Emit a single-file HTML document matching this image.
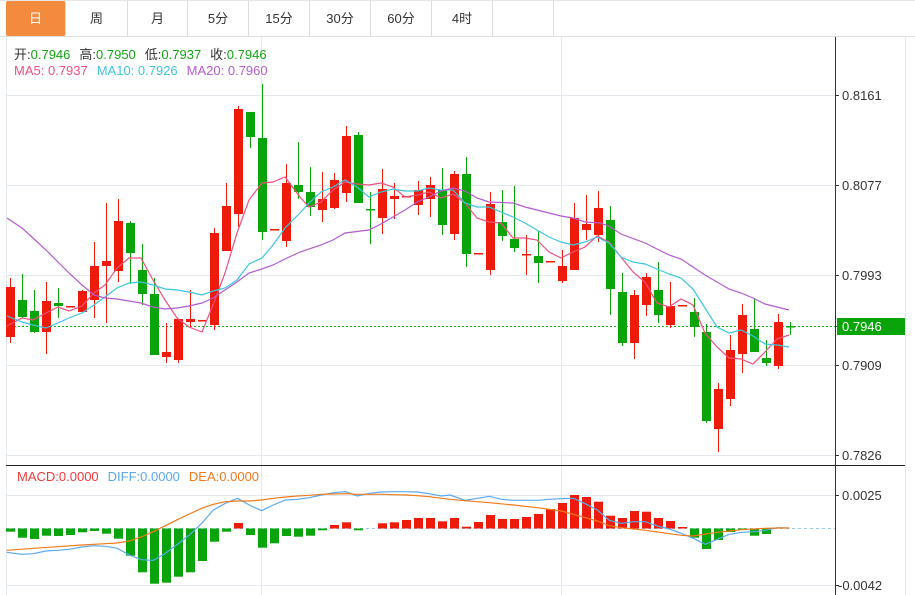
<!DOCTYPE html>
<html><head><meta charset="utf-8"><style>
body{margin:0;width:915px;height:595px;background:#fff;font-family:"Liberation Sans","Noto Sans CJK SC",sans-serif;overflow:hidden;position:relative}
.tab{position:absolute;top:1px;height:35px;line-height:35px;text-align:center;font-size:13px;color:#333;border-right:1px solid #ddd;box-sizing:border-box}
.t{position:absolute;font-size:13px;white-space:nowrap}
.t i{font-style:normal;margin-right:9px}
</style></head><body>
<div style="position:absolute;left:0;top:36px;width:915px;height:1px;background:#ddd"></div>
<div style="position:absolute;left:0;top:0;width:915px;height:1px;background:#e5e5e5"></div>
<div class="tab" style="left:6px;width:60px;background:#f28b3e;color:#fff;border-radius:2px">日</div>
<div class="tab" style="left:66px;width:62px">周</div>
<div class="tab" style="left:128px;width:60px">月</div>
<div class="tab" style="left:188px;width:61px">5分</div>
<div class="tab" style="left:249px;width:61px">15分</div>
<div class="tab" style="left:310px;width:61px">30分</div>
<div class="tab" style="left:371px;width:61px">60分</div>
<div class="tab" style="left:432px;width:61px">4时</div>
<div class="tab" style="left:493px;width:61px;border-right:1px solid #ddd"></div>
<svg id="s" width="915" height="595" style="position:absolute;left:0;top:0"></svg>
<div class="t" style="left:14px;top:44px;color:#333"><i>开:<span style="color:#13a313">0.7946</span></i><i>高:<span style="color:#13a313">0.7950</span></i><i>低:<span style="color:#13a313">0.7937</span></i>收:<span style="color:#13a313">0.7946</span></div>
<div class="t" style="left:14px;top:63px"><i style="color:#f0507f">MA5: 0.7937</i><i style="color:#3ec5dc">MA10: 0.7926</i><span style="color:#b35ccc">MA20: 0.7960</span></div>
<div class="t" style="left:17px;top:469px"><i style="color:#f03a3a">MACD:0.0000</i><i style="color:#5aa9f0">DIFF:0.0000</i><span style="color:#f07a1a">DEA:0.0000</span></div>
<div class="t" style="left:842px;top:88px;color:#333">0.8161</div>
<div class="t" style="left:842px;top:178px;color:#333">0.8077</div>
<div class="t" style="left:842px;top:268px;color:#333">0.7993</div>
<div class="t" style="left:842px;top:358px;color:#333">0.7909</div>
<div class="t" style="left:842px;top:448px;color:#333">0.7826</div>
<div style="position:absolute;left:837px;top:318px;width:68px;height:17px;background:#09a30a"></div>
<div class="t" style="left:842px;top:319px;color:#fff">0.7946</div>
<div class="t" style="left:842px;top:488px;color:#333">0.0025</div>
<div class="t" style="left:838px;top:578px;color:#333">-0.0042</div>
<script>
var s=document.getElementById('s'),h='';
function L(x1,y1,x2,y2,c,w,d){h+='<line x1="'+x1+'" y1="'+y1+'" x2="'+x2+'" y2="'+y2+'" stroke="'+c+'" stroke-width="'+(w||1)+'"'+(d?' stroke-dasharray="'+d+'"':'')+'/>';}
function R(x,y,w,hh,c){h+='<rect x="'+x+'" y="'+y+'" width="'+w+'" height="'+Math.max(hh,1.5)+'" fill="'+c+'"/>';}
function P(pts,c){h+='<polyline fill="none" stroke="'+c+'" stroke-width="1.2" points="'+pts.map(function(p){return p.join(',')}).join(' ')+'"/>';}
var g='#e3e9ef';
[95,185,275,365,455,495,585].forEach(function(y){L(6,y+.5,835,y+.5,g)});
L(261.5,37,261.5,595,g);L(561.5,37,561.5,595,g);
L(6.5,37,6.5,595,g);L(905.5,37,905.5,595,g);
L(835.5,37,835.5,595,'#333');
[95,185,275,365,455,495,585,326].forEach(function(y){L(835,y+.5,839,y+.5,'#333')});
L(6,465.5,905,465.5,'#222');
L(6,326.5,835,326.5,'#13b313',1,'2,2');
L(6,528.5,835,528.5,'#9cc8e0',1,'3,3');
var RD='#ee1a0a',GR='#09a30a';
var C=[['r',287,337,278,343],['g',300,317,274,318],['g',311,332,290,333],['r',301,332,282,354],['g',303,306,288,318],['r',306,306,306,306],['r',291,312,290,312],['r',266,300,242,318],['r',261,266,203,323],['r',221,271,199,282],
['g',223,253,221,284],['g',270,294,244,305],['g',294,355,278,355],['r',352,357,323,363],['r',319,360,319,363],['r',319,322,290,327],['r',320,320,320,320],['r',233,325,228,330],['r',206,251,183,251],['r',109,214,106,227],
['g',112,137,112,148],['g',138,232,84,240],['r',229,229,229,229],['r',183,241,164,247],['g',185,192,142,199],['g',192,207,167,216],['r',199,210,172,222],['r',180,208,173,209],['r',136,193,126,202],['g',135,203,132,203],
['g',209,209,192,244],['r',189,218,169,234],['r',196,199,183,219],['r',196,196,196,196],['r',190,205,181,215],['r',185,199,177,217],['g',190,225,168,235],['r',174,234,171,240],['g',174,254,157,267],['r',253,253,253,253],
['r',204,270,192,275],['g',222,236,190,241],['g',239,248,186,252],['r',254,254,235,275],['g',256,263,231,283],['r',261,261,261,261],['r',266,281,250,283],['r',218,270,203,270],['r',224,230,195,240],['r',208,235,191,242],
['g',220,289,206,315],['g',292,343,273,346],['r',295,343,290,359],['r',277,305,273,316],['g',290,315,262,323],['r',306,325,282,328],['r',305,305,305,305],['g',312,327,298,337],['g',332,421,324,423],['r',389,429,383,452],
['r',350,399,335,406],['r',315,354,304,373],['g',329,352,298,352],['g',358,363,340,366],['r',322,366,314,369],['g',326,326,322,335]];
C.forEach(function(c,i){var x=10.5+12*i,col=c[0]=='r'?RD:GR;L(x,c[3],x,c[4],col);R(x-4.5,c[1],9,c[2]-c[1],col);});
P([[7,326],[22,318],[33,320],[46,313],[58,307],[69,311],[82,306],[94,293],[105,285],[117,268],[129,258],[141,258],[153,280],[165,300],[177,318],[189,327],[202,332],[213,305],[225,273],[237,233],[249,200],[262,183],[273,182],[285,177],[300,197],[309,207],[321,202],[333,190],[345,182],[357,184],[369,185],[381,183],[393,187],[405,197],[417,195],[429,192],[441,198],[453,194],[465,203],[477,218],[489,222],[501,223],[513,238],[525,238],[537,240],[549,252],[561,258],[573,252],[585,247],[597,236],[609,242],[621,257],[633,272],[645,282],[657,303],[669,307],[681,299],[693,305],[705,333],[717,347],[729,358],[741,359],[753,364],[765,352],[777,339],[789,335]],'#f0507f');
P([[7,316],[22,322],[33,325],[46,328],[58,323],[69,318],[82,313],[94,305],[105,297],[117,288],[129,283],[141,282],[153,285],[165,289],[177,290],[189,292],[202,295],[213,291],[225,288],[237,280],[249,264],[262,258],[273,245],[285,228],[300,213],[309,203],[321,192],[333,187],[345,180],[357,187],[369,197],[381,192],[393,189],[405,191],[417,191],[429,188],[441,190],[453,190],[465,203],[477,207],[489,207],[501,212],[513,217],[525,223],[537,230],[549,237],[561,242],[573,245],[585,242],[597,237],[609,243],[621,257],[633,262],[645,264],[657,269],[669,274],[681,278],[693,289],[705,308],[717,327],[729,333],[741,330],[753,336],[765,344],[777,345],[789,347]],'#3ec5dc');
P([[7,218],[22,228],[33,238],[46,250],[58,262],[69,273],[82,285],[94,295],[105,298],[117,299],[129,301],[141,303],[153,307],[165,309],[177,308],[189,306],[202,303],[213,298],[225,290],[237,282],[249,273],[262,269],[273,265],[285,259],[300,252],[321,245],[333,240],[345,233],[369,230],[381,224],[393,217],[405,210],[417,202],[429,197],[441,191],[453,188],[465,191],[477,198],[489,202],[513,203],[525,207],[537,210],[549,213],[561,216],[573,218],[585,222],[600,223],[609,226],[621,234],[645,243],[669,255],[681,259],[693,267],[705,275],[717,282],[729,289],[741,293],[753,298],[765,304],[777,307],[789,310]],'#b35ccc');
var M=[531.7,537.7,539,535.7,536,535,532.3,531,533.7,538.7,555.7,572.3,583.7,582.7,576.7,572.3,561,541.7,531.7,523,535,547.7,543.3,536,536.7,535.7,530.3,525,522.3,530.3,528,523.3,522.3,520,518,518,521.3,518,526.7,522,515,519,519,517,514,509,503,495,497,501.7,515.7,518,511,511.7,518,521,527,537.7,549,540,532,530,535.7,534,529,528.5];
var Z=528.5;
M.forEach(function(v,i){var x=10.5+12*i;if(Math.abs(v-Z)<0.6)return;if(v<Z)R(x-4.5,v,9,Z-v,RD);else R(x-4.5,Z,9,v-Z,GR);});
function Q(a,dx){return a.map(function(p){return [p[0]/3+dx,455+p[1]/3]})}
P(Q([[20,292],[65,298],[100,296],[137,288],[173,286],[208,283],[245,276],[281,272],[316,274],[352,280],[388,300],[424,314],[460,316],[496,295],[532,268],[568,240],[605,205],[640,165],[676,145],[712,130],[748,150],[785,167],[820,150],[856,135],[892,133],[928,128],[964,120],[1000,113],[1036,110],[1072,123],[1108,115],[1144,111],[1180,110],[1216,110],[1252,111],[1288,116],[1324,123],[1350,120]],0).concat(Q([[0,120],[45,136],[83,130],[118,124],[155,133],[190,136],[262,136],[298,133],[334,131],[370,130],[406,146],[442,165],[478,196],[514,205],[550,200],[586,200],[622,213],[658,222],[694,235],[730,250],[766,268],[802,253],[838,238],[874,232],[910,230],[946,226],[982,218],[1018,219]],450)),'#5aa9f0');
P(Q([[20,286],[100,280],[173,275],[245,270],[316,266],[352,264],[388,258],[424,246],[460,230],[496,212],[532,194],[568,177],[605,160],[640,148],[676,140],[712,138],[748,138],[785,135],[820,130],[856,126],[892,123],[928,121],[964,118],[1000,117],[1036,116],[1072,118],[1108,118],[1144,118],[1180,119],[1216,120],[1252,122],[1288,125],[1324,130],[1350,133]],0).concat(Q([[0,133],[45,137],[118,143],[190,150],[262,158],[334,168],[370,178],[406,188],[442,198],[478,212],[514,218],[550,222],[586,226],[622,231],[658,236],[694,241],[730,243],[766,237],[802,232],[838,228],[874,224],[910,222],[946,220],[982,219],[1018,219]],450)),'#f07a1a');
s.innerHTML=h;
</script>
</body></html>
